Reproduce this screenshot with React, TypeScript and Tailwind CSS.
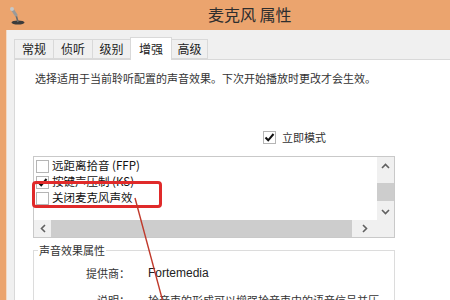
import React from 'react';

const font = { fontFamily: '"Noto Sans CJK SC", "Noto Sans", sans-serif' };

type Tab = { label: string; width: string; active?: boolean };

const tabs: Tab[] = [
  { label: '常规', width: 'w-[40px]' },
  { label: '侦听', width: 'w-[40px]' },
  { label: '级别', width: 'w-[39px]' },
  { label: '增强', width: 'w-[42px]', active: true },
  { label: '高级', width: 'w-[37px]' },
];

function Check({ checked }: { checked?: boolean }) {
  return (
    <div className="w-[13px] h-[13px] border border-[#b5b5b5] bg-white flex items-center justify-center shrink-0">
      {checked && (
        <svg width="11" height="11" viewBox="0 0 11 11">
          <path d="M1.5 5.5 L4.2 8.3 L9.5 2" fill="none" stroke="#111" strokeWidth="2" />
        </svg>
      )}
    </div>
  );
}

function MicIcon() {
  return (
    <svg width="18" height="20" viewBox="0 0 18 20">
      <ellipse cx="9" cy="16.5" rx="6.5" ry="2" fill="#3b3b3b" />
      <path d="M9 16 L7 9" stroke="#6b6b6b" strokeWidth="1.6" />
      <path d="M7 9 L3 3" stroke="#9a9a9a" strokeWidth="3" strokeLinecap="round" />
      <circle cx="3" cy="3" r="2" fill="#c8c8c8" />
    </svg>
  );
}

const items = [
  { label: '远距离拾音 (FFP)', checked: false },
  { label: '按键声压制 (KS)', checked: true },
  { label: '关闭麦克风声效', checked: false },
];

export default function App() {
  return (
    <div
      className="relative w-[450px] h-[300px] overflow-hidden bg-[#eba46e] flex flex-col"
      style={font}
    >
      {/* title bar */}
      <div className="h-[30px] shrink-0 flex items-center">
        <div className="ml-[9px] mt-[2px]">
          <MicIcon />
        </div>
        <div className="ml-[181px] -mt-[2px] text-[16px] leading-none text-[#2e2e2e]">麦克风 属性</div>
      </div>

      {/* dialog body */}
      <div className="flex-1 ml-[6px] bg-[#f0f0f0] border-l border-[#f3d9c4] pl-[7px] pt-[6px] flex flex-col">
        <div className="flex items-end h-[23px]">
          {tabs.map((t) =>
            t.active ? (
              <div
                key={t.label}
                className={`${t.width} h-[23px] -ml-px -mb-px bg-white border border-b-0 border-[#d9d9d9] text-[12px] text-[#222] flex items-center justify-center relative z-10`}
              >
                {t.label}
              </div>
            ) : (
              <div
                key={t.label}
                className={`${t.width} h-[20px] bg-[#f0f0f0] border border-[#d9d9d9] -ml-px first:ml-0 text-[12px] text-[#222] flex items-center justify-center`}
              >
                {t.label}
              </div>
            )
          )}
        </div>

        {/* tab page */}
        <div className="flex-1 bg-white border border-[#d9d9d9] border-r-0 pl-[18px] pt-[10px] text-[11px] text-[#333]">
          <div className="ml-[2px] leading-[16px] whitespace-nowrap">
            选择适用于当前聆听配置的声音效果。下次开始播放时更改才会生效。
          </div>

          <div className="mt-[44px] ml-[230px] flex items-center gap-[6px] h-[14px]">
            <Check checked />
            <span className="leading-none">立即模式</span>
          </div>

          {/* effects list */}
          <div className="mt-[12px] w-[362px] h-[82px] border border-[#c9c9c9] flex flex-col">
            <div className="flex h-[63px]">
              <div className="flex-1 flex flex-col pt-[1px] pl-[2px] text-[#111]">
                {items.map((it) => (
                  <div key={it.label} className="h-[16px] flex items-center gap-[3px] whitespace-nowrap">
                    <Check checked={it.checked} />
                    <span className="leading-none text-[11.5px]">{it.label}</span>
                  </div>
                ))}
              </div>
              <div className="w-[17px] bg-[#f0f0f0] flex flex-col items-center">
                <div className="h-[17px] flex items-center justify-center">
                  <svg width="9" height="6" viewBox="0 0 9 6">
                    <path d="M1 5 L4.5 1.5 L8 5" fill="none" stroke="#606060" strokeWidth="1.6" />
                  </svg>
                </div>
                <div className="mt-[9px] w-[17px] h-[18px] bg-[#cdcdcd]" />
                <div className="mt-[2px] h-[17px] flex items-center justify-center">
                  <svg width="9" height="6" viewBox="0 0 9 6">
                    <path d="M1 1 L4.5 4.5 L8 1" fill="none" stroke="#606060" strokeWidth="1.6" />
                  </svg>
                </div>
              </div>
            </div>
            <div className="flex h-[17px]">
              <div className="flex-1 flex bg-[#f0f0f0]">
                <div className="w-[17px] flex items-center justify-center">
                  <svg width="6" height="9" viewBox="0 0 6 9">
                    <path d="M5 1 L1.5 4.5 L5 8" fill="none" stroke="#606060" strokeWidth="1.6" />
                  </svg>
                </div>
                <div className="w-[301px] bg-[#cdcdcd]" />
                <div className="flex-1 flex items-center justify-center">
                  <svg width="6" height="9" viewBox="0 0 6 9">
                    <path d="M1 1 L4.5 4.5 L1 8" fill="none" stroke="#606060" strokeWidth="1.6" />
                  </svg>
                </div>
              </div>
              <div className="w-[17px] bg-[#f0f0f0]" />
            </div>
          </div>

          {/* properties group */}
          <div className="mt-[12px] w-[362px] h-[80px] border border-[#dcdcdc] relative">
            <div className="absolute -top-[9px] left-[4px] bg-white px-px leading-[16px] text-[11px]">
              声音效果属性
            </div>
            <div className="pt-[14px] flex flex-col gap-[11px]">
              <div className="flex items-center h-[16px]">
                <div className="w-[96px] text-right leading-none">提供商：</div>
                <div
                  className="ml-[18px] text-[12px] text-[#222] leading-none"
                  style={{ fontFamily: '"Liberation Sans", Arial, sans-serif' }}
                >
                  Fortemedia
                </div>
              </div>
              <div className="flex items-center h-[16px]">
                <div className="w-[96px] text-right leading-none">说明：</div>
                <div className="ml-[18px] leading-none whitespace-nowrap">
                  拾音束的形成可以增强拾音束中的语音信号并压
                </div>
              </div>
            </div>
          </div>
        </div>
      </div>

      {/* annotation */}
      <div className="absolute left-[32px] top-[181px] w-[130px] h-[27px] border-[3px] border-[#e02a2a] rounded-[4px]" />
      <svg className="absolute left-0 top-0 pointer-events-none" width="450" height="300">
        <line x1="135" y1="198" x2="163" y2="302" stroke="#c0392b" strokeWidth="1.4" />
      </svg>
    </div>
  );
}
